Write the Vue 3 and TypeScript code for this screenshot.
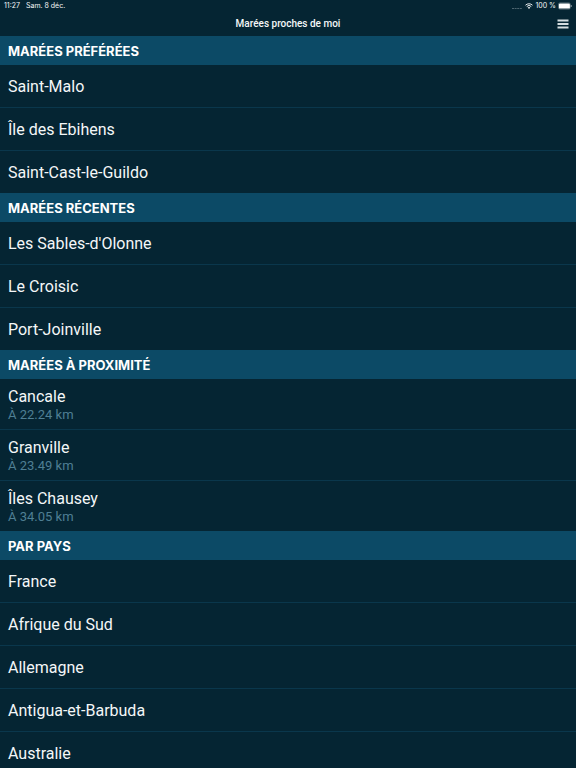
<script setup lang="ts">
interface Place {
  name: string
  distance?: string
}

interface Section {
  id: string
  title: string
  places: Place[]
}

const sections: Section[] = [
  {
    id: 'favorites',
    title: 'MARÉES PRÉFÉRÉES',
    places: [{ name: 'Saint-Malo' }, { name: 'Île des Ebihens' }, { name: 'Saint-Cast-le-Guildo' }],
  },
  {
    id: 'recent',
    title: 'MARÉES RÉCENTES',
    places: [{ name: "Les Sables-d'Olonne" }, { name: 'Le Croisic' }, { name: 'Port-Joinville' }],
  },
  {
    id: 'nearby',
    title: 'MARÉES À PROXIMITÉ',
    places: [
      { name: 'Cancale', distance: 'À 22.24 km' },
      { name: 'Granville', distance: 'À 23.49 km' },
      { name: 'Îles Chausey', distance: 'À 34.05 km' },
    ],
  },
  {
    id: 'countries',
    title: 'PAR PAYS',
    places: [
      { name: 'France' },
      { name: 'Afrique du Sud' },
      { name: 'Allemagne' },
      { name: 'Antigua-et-Barbuda' },
      { name: 'Australie' },
    ],
  },
]
</script>

<template>
  <div class="app">
    <header class="top">
      <div class="status">
        <div class="status-group status-left">
          <span>11:27</span>
          <span>Sam. 8 déc.</span>
        </div>
        <div class="status-group">
          <svg class="signal" viewBox="0 0 10 8" aria-hidden="true">
            <path d="M0 6.5h2M2.6 6.5h2M5.2 6.5h2M7.8 6.5h2" />
          </svg>
          <svg class="wifi" viewBox="0 0 16 12" aria-hidden="true">
            <path d="M1 4.4a10 10 0 0 1 14 0M3.5 7a6.4 6.4 0 0 1 9 0" />
            <path class="wifi-dot" d="M8 11.8 5.4 9.2a3.7 3.7 0 0 1 5.2 0z" />
          </svg>
          <span>100 %</span>
          <svg class="battery" viewBox="0 0 14 8" aria-hidden="true">
            <rect class="battery-shell" x="0.4" y="0.9" width="12" height="6.2" rx="1.6" />
            <rect class="battery-level" x="0.9" y="1.4" width="11" height="5.2" rx="1.2" />
            <path class="battery-level" d="M12.9 3c.9.2.9 1.8 0 2z" />
          </svg>
        </div>
      </div>
      <div class="nav">
        <h1 class="title">Marées proches de moi</h1>
        <button class="menu" type="button" aria-label="Menu">
          <svg viewBox="0 0 12 10" aria-hidden="true">
            <path d="M.5 1.5h11M.5 5h11M.5 8.5h11" />
          </svg>
        </button>
      </div>
    </header>
    <main class="list">
      <section v-for="section in sections" :key="section.id">
        <h2 class="heading">{{ section.title }}</h2>
        <ul class="rows">
          <li v-for="place in section.places" :key="place.name" class="row">
            <a class="link" :class="{ detailed: place.distance }" href="#">
              <span class="name">{{ place.name }}</span>
              <span v-if="place.distance" class="distance">{{ place.distance }}</span>
            </a>
          </li>
        </ul>
      </section>
    </main>
  </div>
</template>

<style>
body {
  background: #052533;
}
</style>

<style scoped>
.app {
  display: flex;
  flex-direction: column;
  height: 100vh;
  background: #052533;
  color: #f4f7f8;
  font-family: Inter, "Liberation Sans", sans-serif;
}

.top {
  flex: none;
}

.status {
  display: flex;
  justify-content: space-between;
  height: 12px;
  padding: 0 4px;
  font-size: 7px;
  line-height: 12px;
}

.status-group {
  display: flex;
  align-items: center;
  gap: 2px;
}

.status-left {
  gap: 6px;
}

.signal {
  width: 10px;
  height: 8px;
  margin-right: 1px;
  fill: none;
  stroke: #4d6570;
  stroke-width: 1;
}

.wifi {
  width: 8px;
  height: 6px;
  fill: none;
  stroke: #f4f7f8;
  stroke-width: 1.9;
}

.wifi-dot {
  fill: #f4f7f8;
  stroke: none;
}

.battery {
  width: 14px;
  height: 8px;
}

.battery-shell {
  fill: none;
  stroke: #81939b;
  stroke-width: 0.6;
}

.battery-level {
  fill: #ffffff;
}

.nav {
  display: grid;
  grid-template-columns: 1fr auto 1fr;
  align-items: center;
  height: 24px;
  padding: 0 7px;
}

.title {
  grid-column: 2;
  margin: 0;
  font-family: Roboto, Inter, sans-serif;
  font-size: 10px;
  font-weight: 500;
  line-height: 24px;
}

.menu {
  display: flex;
  justify-self: end;
  padding: 0;
  border: 0;
  background: none;
}

.menu svg {
  width: 12px;
  height: 10px;
  fill: none;
  stroke: #d5dde0;
  stroke-width: 1.8;
}

.list {
  flex: 1;
  min-height: 0;
  overflow-y: auto;
  scrollbar-width: none;
}

.heading {
  margin: 0;
  padding: 1px 8px 0;
  background: #0c4a66;
  color: #ffffff;
  font-size: 13px;
  font-weight: 700;
  line-height: 28px;
}

.rows {
  margin: 0;
  padding: 0;
  list-style: none;
}

.row + .row {
  border-top: 1px solid #0a374c;
}

.link {
  display: flex;
  flex-direction: column;
  padding: 12px 8px 10px;
  color: inherit;
  text-decoration: none;
}

.detailed {
  padding: 8px 8px 6px;
}

.name {
  font-family: Roboto, Inter, sans-serif;
  font-size: 16px;
  line-height: 20px;
}

.distance {
  color: #4f7f94;
  font-family: Roboto, Inter, sans-serif;
  font-size: 13px;
  line-height: 16px;
}
</style>
